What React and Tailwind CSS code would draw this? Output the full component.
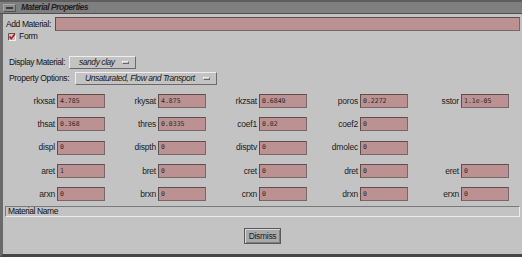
import React from 'react';

const rows = [
  [['rkxsat', '4.785'], ['rkysat', '4.875'], ['rkzsat', '0.6849'], ['poros', '0.2272'], ['sstor', '1.1e-05']],
  [['thsat', '0.368'], ['thres', '0.0335'], ['coef1', '0.02'], ['coef2', '0'], null],
  [['displ', '0'], ['dispth', '0'], ['disptv', '0'], ['dmolec', '0'], null],
  [['aret', '1'], ['bret', '0'], ['cret', '0'], ['dret', '0'], ['eret', '0']],
  [['arxn', '0'], ['brxn', '0'], ['crxn', '0'], ['drxn', '0'], ['erxn', '0']],
];

function OptionMenu({ label, width }) {
  return (
    <div
      className={`h-[13px] ${width} shrink-0 flex items-center justify-between bg-[#c3c3c3] border border-t-[#eeeeee] border-l-[#eeeeee] border-b-[#6a6a6a] border-r-[#6a6a6a] pl-[9px] pr-[6px]`}
    >
      <span className="italic whitespace-nowrap text-[8.5px] tracking-[-0.45px] leading-none text-[#1a1a1a]">{label}</span>
      <span className="w-[7px] h-[3px] shrink-0 bg-[#c3c3c3] border border-t-[#eeeeee] border-l-[#eeeeee] border-b-[#6a6a6a] border-r-[#6a6a6a]" />
    </div>
  );
}

function Field({ value, className = '' }) {
  return (
    <div
      className={`h-[14px] bg-[#bb9191] border border-t-[#5e4e4e] border-l-[#5e4e4e] border-b-[#7a6666] border-r-[#7a6666] flex items-center pl-[2px] font-['DejaVu_Sans_Mono','Liberation_Mono',monospace] text-[6.5px] leading-none text-[#2a2a2a] ${className}`}
    >
      {value}
    </div>
  );
}

export default function App() {
  return (
    <div className="w-[522px] h-[257px] bg-[#c3c3c3] flex flex-col overflow-hidden font-['Liberation_Sans',Arial,sans-serif] text-[#141414]">
      {/* title bar */}
      <div className="h-[14px] shrink-0 bg-[#7f7f7f] border-t-2 border-t-[#5e5e5e] border-b border-b-[#505050] flex items-center pl-[3px]">
        <div className="w-[13px] h-[8px] bg-[#8c8c8c] border border-t-[#a8a8a8] border-l-[#a8a8a8] border-b-[#555] border-r-[#555] flex items-center justify-center">
          <span className="w-[7px] h-[2px] bg-[#3c3c3c]" />
        </div>
        <span className="ml-[5px] italic font-bold whitespace-nowrap text-[8.5px] tracking-[-0.5px] leading-none text-[#1e1e1e]">Material Properties</span>
      </div>

      <div className="flex-1 flex flex-col border-l-[3px] border-l-[#6a6a6a] border-b-[3px] border-b-[#474747] pl-[2px] pr-[2px]">
        {/* add material */}
        <div className="mt-[3px] h-[14px] flex items-center">
          <span className="ml-[1px] w-[49px] shrink-0 whitespace-nowrap text-[8.5px] tracking-[-0.4px] leading-none">Add Material:</span>
          <Field value="" className="flex-1" />
        </div>

        {/* form checkbox */}
        <div className="mt-[1px] h-[9px] flex items-center ml-[3px]">
          <svg width="8" height="8" viewBox="0 0 8 8">
            <rect x="0" y="0" width="8" height="8" fill="#c3c3c3" />
            <path d="M0.5 7.5V0.5H7.5" stroke="#5a5a5a" strokeWidth="1" fill="none" />
            <path d="M0.5 7.5H7.5V0.5" stroke="#f0f0f0" strokeWidth="1" fill="none" />
            <path d="M1.5 3.5L3.2 5.8L7 1" stroke="#c81414" strokeWidth="1.6" fill="none" />
          </svg>
          <span className="ml-[3px] whitespace-nowrap text-[8.5px] tracking-[-0.3px] leading-none">Form</span>
        </div>

        {/* display material */}
        <div className="mt-[15px] h-[13px] flex items-center pl-[4px]">
          <span className="w-[60px] shrink-0 whitespace-nowrap text-[8.5px] tracking-[-0.4px] leading-none">Display Material:</span>
          <OptionMenu label="sandy clay" width="w-[67px]" />
        </div>

        {/* property options */}
        <div className="mt-[3px] h-[13px] flex items-center pl-[4px]">
          <span className="w-[66px] shrink-0 whitespace-nowrap text-[8.5px] tracking-[-0.35px] leading-none">Property Options:</span>
          <OptionMenu label="Unsaturated, Flow and Transport" width="w-[142px]" />
        </div>

        {/* parameter grid */}
        <div className="mt-[9px] ml-[1px] grid grid-cols-[repeat(5,101px)] gap-y-[9.3px]">
          {rows.flatMap((row, r) =>
            row.map((cell, c) =>
              cell ? (
                <div key={`${r}-${c}`} className="h-[14px] flex items-center">
                  <span className="w-[51px] pr-[2px] text-right whitespace-nowrap text-[8.5px] tracking-[-0.2px] leading-none text-[#1c1c1c]">{cell[0]}</span>
                  <Field value={cell[1]} className="w-[48px]" />
                </div>
              ) : (
                <div key={`${r}-${c}`} className="h-[14px]" />
              )
            )
          )}
        </div>

        {/* material name */}
        <div className="mt-[5px] h-[11px] flex items-center border border-t-[#7a7a7a] border-l-[#7a7a7a] border-b-[#ececec] border-r-[#ececec] pl-[2px]">
          <span className="whitespace-nowrap text-[8.5px] tracking-[-0.4px] leading-none text-[#111]">Material Name</span>
        </div>

        {/* dismiss */}
        <div className="mt-[11px] flex justify-center">
          <button
            type="button"
            className="h-[16px] w-[37px] bg-[#a9a9a9] border border-[#5a5a5a] shadow-[inset_1px_1px_0_#d6d6d6,inset_-1px_-1px_0_#7c7c7c] whitespace-nowrap text-[8.5px] tracking-[-0.3px] leading-none text-[#222]"
          >
            Dismiss
          </button>
        </div>
      </div>
    </div>
  );
}
